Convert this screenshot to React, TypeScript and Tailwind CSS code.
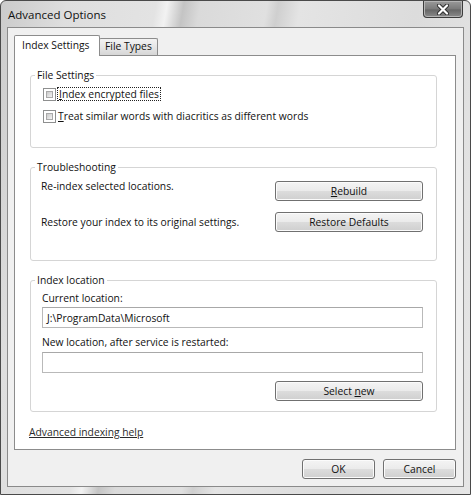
const font = "font-['Open_Sans',sans-serif]"

const Button = ({ children, className = '' }: { children: React.ReactNode; className?: string }) => (
  <div
    className={`h-[20px] flex items-center justify-center rounded-[3px] border border-[#707070] bg-[linear-gradient(180deg,#f4f4f4_0%,#ebebeb_48%,#dcdcdc_52%,#cfcfcf_100%)] shadow-[inset_0_0_0_1px_#fbfbfb] text-[10.3px] leading-[14px] text-[#111] ${className}`}
  >
    <span>{children}</span>
  </div>
)

const Checkbox = () => (
  <div className="w-[13px] h-[13px] border border-[#8e8f8f] bg-white p-[2px] shrink-0">
    <div className="w-full h-full border border-[#a9a9a9] bg-[linear-gradient(135deg,#c9c9c9_0%,#e2e2e2_60%,#f4f4f4_100%)]" />
  </div>
)

const Group = ({ title, className = '', children }: { title: string; className?: string; children: React.ReactNode }) => (
  <div className={`ml-[15px] w-[407px] border border-[#d5d5d5] rounded-[3px] ${className}`}>
    <div className="-mt-[7px] ml-[4px] w-fit bg-white px-[2px] text-[10.3px] leading-[12px] text-[#111]">
      {title}
    </div>
    {children}
  </div>
)

const TextBox = ({ value }: { value?: string }) => (
  <div className="h-[21px] border border-[#b9b9b9] border-t-[#a8a8a8] bg-white flex items-center pl-[4px] text-[10.3px] text-[#111]">
    {value}
  </div>
)

export default function App() {
  return (
    <div
      className={`${font} w-[471px] h-[495px] flex flex-col border border-[#4a4a4a] rounded-t-[6px] overflow-hidden bg-[linear-gradient(100deg,#cbcbcb_0%,#dedede_12%,#e3e3e3_28%,#f2f2f2_30%,#c4c4c4_33%,#dadada_36%,#e0e0e0_48%,#cfcfcf_50%,#e4e4e4_54%,#dcdcdc_75%,#e6e6e6_100%)]`}
    >
      {/* title bar */}
      <div className="h-[26px] flex items-start pl-[7px] pr-[7px] shrink-0">
        <div className="mt-[6px] text-[11.5px] leading-[16px] text-[#111]">Advanced Options</div>
        <div className="ml-auto w-[40px] h-[17px] rounded-b-[4px] border border-t-0 border-[#3c3c3c] bg-[linear-gradient(180deg,#9a9a9a_0%,#7a7a7a_50%,#666_55%,#8a8a8a_100%)] shadow-[inset_0_0_0_1px_#b4b4b4] flex items-center justify-center">
          <svg width="14" height="11" viewBox="0 0 14 11">
            <path d="M3 1.5 L11 9.5 M11 1.5 L3 9.5" stroke="#2e2e2e" strokeWidth="4" strokeLinecap="round" />
            <path d="M3 1.5 L11 9.5 M11 1.5 L3 9.5" stroke="#ffffff" strokeWidth="2.2" strokeLinecap="round" />
          </svg>
        </div>
      </div>

      {/* client area */}
      <div className="mx-[6px] flex-1 flex flex-col border border-[#8a8a8a] bg-[#f0f0f0] pl-[6px] pr-[7px] pt-[7px] pb-[7px]">
        {/* tabs */}
        <div className="flex items-end">
          <div className="relative z-10 -mb-[1px] h-[21px] w-[86px] border border-b-0 border-[#8c8c8c] rounded-t-[2px] bg-white pl-[7px] flex items-center text-[10.3px] text-[#111]">
            Index Settings
          </div>
          <div className="-ml-[1px] h-[17px] w-[59px] border border-b-0 border-[#8c8c8c] rounded-t-[2px] bg-[linear-gradient(180deg,#f3f3f3_0%,#e6e6e6_50%,#d6d6d6_100%)] pl-[5px] flex items-center text-[10.3px] text-[#111]">
            File Types
          </div>
        </div>

        {/* panel */}
        <div className="border border-[#8c8c8c] bg-white pt-[19px] pb-[10px] text-[10.3px] leading-[14px] text-[#111]">
          <Group title="File Settings" className="pb-[23px]">
            <div className="mt-[5px] h-[16px] pl-[12px] flex items-center">
              <Checkbox />
              <span className="ml-[1px] px-[1px] border border-dotted border-[#222] leading-[12px]">
                <span className="underline">I</span>ndex encrypted files
              </span>
            </div>
            <div className="mt-[6px] h-[16px] pl-[12px] flex items-center">
              <Checkbox />
              <span className="ml-[2px]">
                <span className="underline">T</span>reat similar words with diacritics as different words
              </span>
            </div>
          </Group>

          <Group title="Troubleshooting" className="mt-[19px] pb-[28px]">
            <div className="mt-[6px] h-[22px] pl-[10px] pr-[13px] flex items-start justify-between">
              <span>Re-index selected locations.</span>
              <Button className="mt-[2px] w-[148px]">
                <span className="underline">R</span>ebuild
              </Button>
            </div>
            <div className="mt-[11px] h-[20px] pl-[10px] pr-[13px] flex items-start justify-between">
              <span className="mt-[3px]">Restore your index to its original settings.</span>
              <Button className="w-[148px]">Restore Defaults</Button>
            </div>
          </Group>

          <Group title="Index location" className="mt-[19px] pb-[10px]">
            <div className="pl-[11px] pr-[13px] flex flex-col">
              <span className="mt-[5px]">Current location:</span>
              <div className="mt-[2px]">
                <TextBox value="J:\ProgramData\Microsoft" />
              </div>
              <span className="mt-[7px]">New location, after service is restarted:</span>
              <div className="mt-[3px]">
                <TextBox />
              </div>
              <Button className="mt-[8px] w-[148px] self-end">
                Select <span className="underline">n</span>ew
              </Button>
            </div>
          </Group>

          <div className="mt-[13px] ml-[14px] w-fit underline text-[#2a2a2a]">Advanced indexing help</div>
        </div>

        {/* footer */}
        <div className="mt-[9px] flex justify-end gap-[8px]">
          <Button className="w-[73px]">OK</Button>
          <Button className="w-[73px]">Cancel</Button>
        </div>
      </div>

      <div className="h-[7px] shrink-0" />
    </div>
  )
}
